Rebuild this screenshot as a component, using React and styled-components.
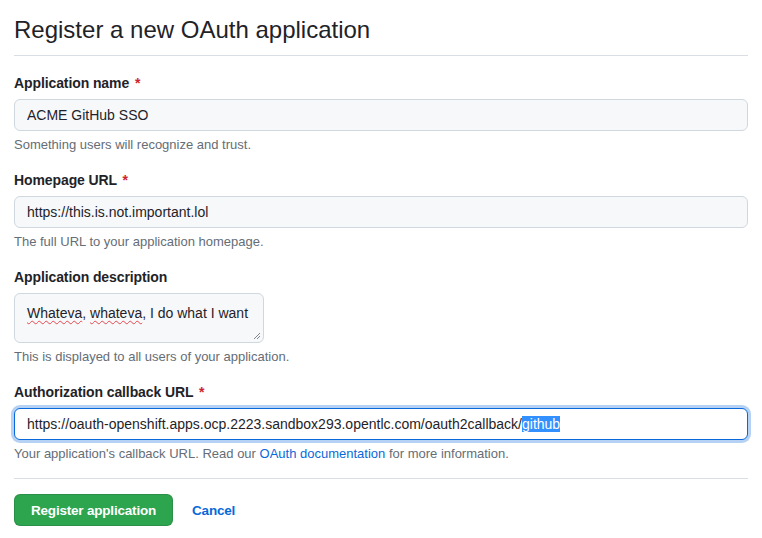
import React from 'react';
import styled, { createGlobalStyle } from 'styled-components';

const GlobalStyle = createGlobalStyle`
  body {
    margin: 0;
    background: #ffffff;
    font-family: "Liberation Sans", Arial, sans-serif;
    color: #1f2328;
  }
`

const Page = styled.div`
  width: 734px;
  padding: 12px 0 0 14px;
`
const Header = styled.div`
  padding-bottom: 7px;
  border-bottom: 1px solid #d8dee4;
  margin-bottom: 17px;
`
const Title = styled.h2`
  margin: 0;
  font-size: 24px;
  font-weight: 400;
  line-height: 36px;
`
const Group = styled.div`
  margin-bottom: ${props => props.last ? '15px' : '16px'};
`
const Label = styled.label`
  display: block;
  font-size: 14px;
  font-weight: 700;
  line-height: 20px;
  margin-bottom: 6px;
  letter-spacing: -0.1px;
`
const Required = styled.span`
  color: #cf222e;
  margin-left: 2px;
`
const Input = styled.input`
  box-sizing: border-box;
  display: block;
  width: 100%;
  height: 32px;
  padding: 0 12px;
  font-family: inherit;
  font-size: 14px;
  color: #1f2328;
  background: #f6f8fa;
  border: 1px solid #d0d7de;
  border-radius: 6px;
  outline: none;
`
const TextArea = styled.div`
  position: relative;
  box-sizing: border-box;
  width: 250px;
  height: 50px;
  padding: 9px 12px;
  font-size: 14px;
  line-height: 20px;
  background: #f6f8fa;
  border: 1px solid #d0d7de;
  border-radius: 6px;
`
const Misspelled = styled.span`
  text-decoration: underline wavy #e5484d;
  text-decoration-thickness: 1px;
  text-underline-offset: 2px;
`
const Grip = styled.svg`
  position: absolute;
  right: 2px;
  bottom: 2px;
`
const FocusField = styled.div`
  box-sizing: border-box;
  display: flex;
  align-items: center;
  height: 32px;
  padding: 0 12px;
  font-size: 14px;
  background: #ffffff;
  border: 1px solid #0969da;
  border-radius: 6px;
  box-shadow: 0 0 0 3px rgba(9, 105, 218, 0.3);
  white-space: nowrap;
`
const Selected = styled.span`
  background: #3390ff;
  color: #ffffff;
`
const Note = styled.p`
  margin: 5px 0 0;
  font-size: 13px;
  line-height: 18px;
  color: #656d76;
`
const Link = styled.a`
  color: #0969da;
  text-decoration: none;
`
const Divider = styled.hr`
  margin: 0 0 15px;
  border: 0;
  border-top: 1px solid #d8dee4;
`
const Actions = styled.div`
  display: flex;
  align-items: center;
  gap: 19px;
`
const Button = styled.button`
  height: 32px;
  padding: 0 16px;
  font-family: inherit;
  font-size: 13.5px;
  font-weight: 700;
  letter-spacing: -0.2px;
  color: #ffffff;
  background: #2da44e;
  border: 1px solid rgba(27, 31, 36, 0.15);
  border-radius: 6px;
`
const Cancel = styled.a`
  font-size: 13.5px;
  font-weight: 700;
  letter-spacing: -0.2px;
  color: #0969da;
  text-decoration: none;
`

function App () {
  return (
    <Page>
      <GlobalStyle />
      <Header>
        <Title>Register a new OAuth application</Title>
      </Header>

      <Group>
        <Label>Application name <Required>*</Required></Label>
        <Input defaultValue="ACME GitHub SSO" />
        <Note>Something users will recognize and trust.</Note>
      </Group>

      <Group>
        <Label>Homepage URL <Required>*</Required></Label>
        <Input defaultValue="https://this.is.not.important.lol" />
        <Note>The full URL to your application homepage.</Note>
      </Group>

      <Group>
        <Label>Application description</Label>
        <TextArea>
          <Misspelled>Whateva</Misspelled>, <Misspelled>whateva</Misspelled>, I do what I want
          <Grip width="8" height="8" viewBox="0 0 8 8">
            <path d="M7 1 L1 7 M7 4 L4 7" stroke="#7d8590" strokeWidth="1" />
          </Grip>
        </TextArea>
        <Note>This is displayed to all users of your application.</Note>
      </Group>

      <Group last>
        <Label>Authorization callback URL <Required>*</Required></Label>
        <FocusField>
          https://oauth-openshift.apps.ocp.2223.sandbox293.opentlc.com/oauth2callback/<Selected>github</Selected>
        </FocusField>
        <Note>Your application's callback URL. Read our <Link href="#">OAuth documentation</Link> for more information.</Note>
      </Group>

      <Divider />

      <Actions>
        <Button>Register application</Button>
        <Cancel href="#">Cancel</Cancel>
      </Actions>
    </Page>
  )
}

export default App
